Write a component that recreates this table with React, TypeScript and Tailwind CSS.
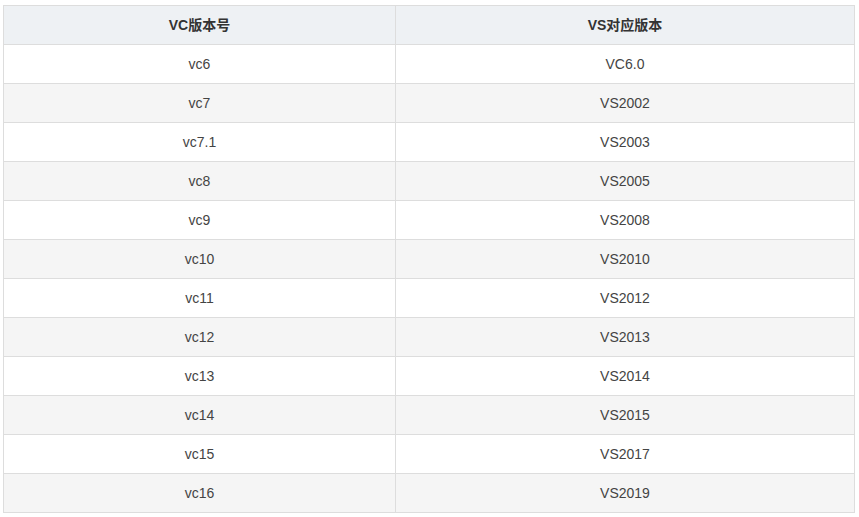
import React from "react";

const rows: [string, string][] = [
  ["vc6", "VC6.0"],
  ["vc7", "VS2002"],
  ["vc7.1", "VS2003"],
  ["vc8", "VS2005"],
  ["vc9", "VS2008"],
  ["vc10", "VS2010"],
  ["vc11", "VS2012"],
  ["vc12", "VS2013"],
  ["vc13", "VS2014"],
  ["vc14", "VS2015"],
  ["vc15", "VS2017"],
  ["vc16", "VS2019"],
];

export default function App() {
  return (
    <div
      className="w-[859px] h-[517px] bg-white pt-[5px] pl-[3px]"
      style={{ fontFamily: '"Liberation Sans", Arial, "Noto Sans CJK SC", sans-serif' }}
    >
      <table className="border-collapse text-[14px] text-[#444] w-[852px]">
        <thead>
          <tr className="bg-[#eef1f4] h-[39px] text-[#333]">
            <th className="w-[392px] border border-[#dddddd] font-bold text-center">VC版本号</th>
            <th className="border border-[#dddddd] font-bold text-center">VS对应版本</th>
          </tr>
        </thead>
        <tbody>
          {rows.map(([a, b], i) => (
            <tr key={a} className={`h-[39px] ${i % 2 === 1 ? "bg-[#f5f5f5]" : "bg-white"}`}>
              <td className="border border-[#dddddd] text-center">{a}</td>
              <td className="border border-[#dddddd] text-center">{b}</td>
            </tr>
          ))}
        </tbody>
      </table>
    </div>
  );
}
